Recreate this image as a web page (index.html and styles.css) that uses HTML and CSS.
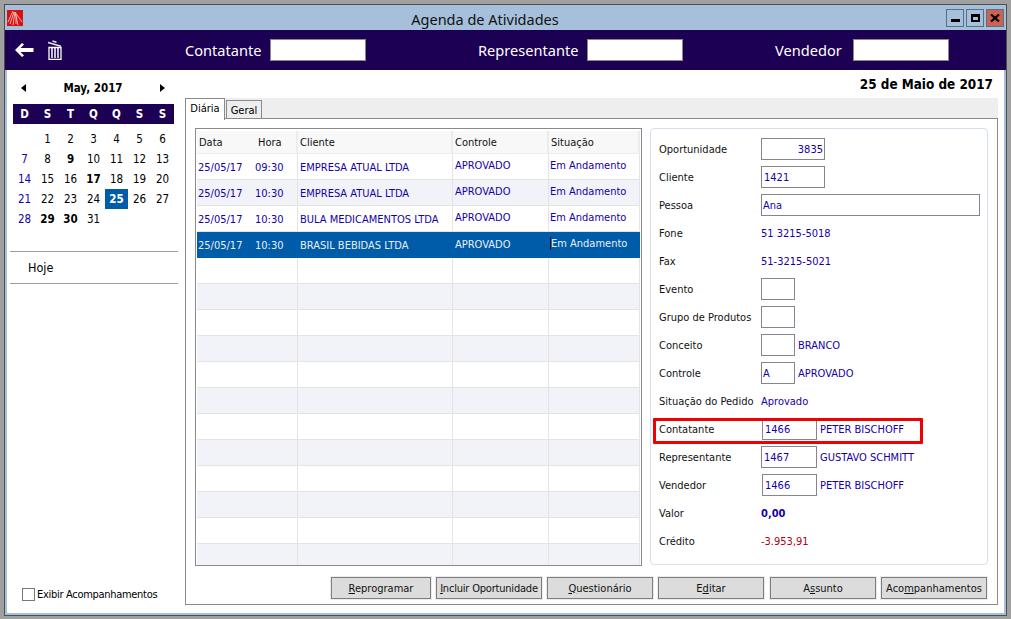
FILE: index.html
```html
<!DOCTYPE html>
<html lang="pt">
<head>
<meta charset="utf-8">
<title>Agenda de Atividades</title>
<link rel="stylesheet" href="styles.css">
</head>
<body>
<div class="window">
  <div class="titlebar">
    <svg class="logo" viewBox="0 0 16 16"><rect width="16" height="16" fill="#d81010"/><path d="M1 12 6 1M3 14 7 2M6 15 8 2 10 9M9 14 9 7M11 15 8 2 15 12" stroke="#f6b0a8" stroke-width="1" fill="none"/></svg>
    <span class="title">Agenda de Atividades</span>
    <div class="winbtns">
      <span class="winbtn"><i class="g-min"></i></span>
      <span class="winbtn"><i class="g-max"></i></span>
      <span class="winbtn winbtn-close">
        <svg viewBox="0 0 10 8" class="g-x"><path d="M1 0.5 9 7.5M9 0.5 1 7.5" stroke="#000" stroke-width="2.2"/></svg>
      </span>
    </div>
  </div>
  <div class="toolbar">
    <div class="tools">
      <svg class="i-back" viewBox="0 0 20 16"><path d="M1 8 8 1 10 2.5 6.5 6H19.5V10H6.5L10 13.5 8 15Z" fill="#fff"/></svg>
      <svg class="i-trash" viewBox="0 0 16 20"><path d="M1 2.4 14 6.2M5.5 1 9.5 2.2" stroke="#e4e4e4" stroke-width="1.6" fill="none"/><path d="M2 7.5H14V19.4H2Z" fill="none" stroke="#fff" stroke-width="1.3"/><path d="M5 8V18M8 8V18M11 8V18" stroke="#fff" stroke-width="1.5"/></svg>
    </div>
    <span class="tb-label tb-first">Contatante</span><span class="tb-input"></span>
    <span class="tb-label tb-second">Representante</span><span class="tb-input"></span>
    <span class="tb-label tb-third">Vendedor</span><span class="tb-input"></span>
  </div>
  <div class="main">
    <aside class="sidebar">
      <div class="month"><span class="arrow-l"></span><b>May, 2017</b><span class="arrow-r"></span></div>
      <div class="cal cal-head"><span>D</span><span>S</span><span>T</span><span>Q</span><span>Q</span><span>S</span><span>S</span></div>
      <div class="cal cal-days">
        <span></span><span>1</span><span>2</span><span>3</span><span>4</span><span>5</span><span>6</span>
        <span class="sun">7</span><span>8</span><b>9</b><span>10</span><span>11</span><span>12</span><span>13</span>
        <span class="sun">14</span><span>15</span><span>16</span><b>17</b><span>18</span><span>19</span><span>20</span>
        <span class="sun">21</span><span>22</span><span>23</span><span>24</span><b class="today">25</b><span>26</span><span>27</span>
        <span class="sun">28</span><b>29</b><b>30</b><span>31</span>
      </div>
      <div class="hoje">Hoje</div>
      <label class="exibir"><span class="check"></span>Exibir Acompanhamentos</label>
    </aside>
    <section class="content">
      <div class="date">25 de Maio de 2017</div>
      <div class="tabs"><span class="tab tab-active">Diária</span><span class="tab">Geral</span></div>
      <div class="panel">
        <div class="panel-top">
          <div class="grid-wrap">
            <table class="grid">
              <colgroup><col class="c1"><col class="c2"><col class="c3"><col class="c4"><col class="c5"></colgroup>
              <thead><tr><th class="h-data">Data</th><th class="h-hora">Hora</th><th>Cliente</th><th>Controle</th><th>Situação</th></tr></thead>
              <tbody>
                <tr><td class="d">25/05/17</td><td class="t">09:30</td><td class="n">EMPRESA ATUAL LTDA</td><td class="up">APROVADO</td><td class="up s">Em Andamento</td></tr>
                <tr><td class="d">25/05/17</td><td class="t">10:30</td><td class="n">EMPRESA ATUAL LTDA</td><td class="up">APROVADO</td><td class="up s">Em Andamento</td></tr>
                <tr><td class="d">25/05/17</td><td class="t">10:30</td><td class="n">BULA MEDICAMENTOS LTDA</td><td class="up">APROVADO</td><td class="up s">Em Andamento</td></tr>
                <tr class="sel"><td class="d">25/05/17</td><td class="t">10:30</td><td class="n">BRASIL BEBIDAS LTDA</td><td class="c">APROVADO</td><td class="up s"><span class="caret">Em Andamento</span></td></tr>
                <tr><td class="d"></td><td></td><td></td><td></td><td></td></tr>
                <tr><td class="d"></td><td></td><td></td><td></td><td></td></tr>
                <tr><td class="d"></td><td></td><td></td><td></td><td></td></tr>
                <tr><td class="d"></td><td></td><td></td><td></td><td></td></tr>
                <tr><td class="d"></td><td></td><td></td><td></td><td></td></tr>
                <tr><td class="d"></td><td></td><td></td><td></td><td></td></tr>
                <tr><td class="d"></td><td></td><td></td><td></td><td></td></tr>
                <tr><td class="d"></td><td></td><td></td><td></td><td></td></tr>
                <tr><td class="d"></td><td></td><td></td><td></td><td></td></tr>
                <tr><td class="d"></td><td></td><td></td><td></td><td></td></tr>
                <tr><td class="d"></td><td></td><td></td><td></td><td></td></tr>
                <tr><td class="d"></td><td></td><td></td><td></td><td></td></tr>
              </tbody>
            </table>
          </div>
          <div class="card">
            <div class="row"><span class="lbl">Oportunidade</span><span class="inp w64 right">3835</span></div>
            <div class="row"><span class="lbl">Cliente</span><span class="inp w64">1421</span></div>
            <div class="row"><span class="lbl">Pessoa</span><span class="inp w219 tight">Ana</span></div>
            <div class="row"><span class="lbl">Fone</span><span class="val">51 3215-5018</span></div>
            <div class="row"><span class="lbl">Fax</span><span class="val">51-3215-5021</span></div>
            <div class="row"><span class="lbl">Evento</span><span class="inp w34"></span></div>
            <div class="row"><span class="lbl">Grupo de Produtos</span><span class="inp w34"></span></div>
            <div class="row"><span class="lbl">Conceito</span><span class="inp w34"></span><span class="val after">BRANCO</span></div>
            <div class="row"><span class="lbl">Controle</span><span class="inp w34 tight">A</span><span class="val after">APROVADO</span></div>
            <div class="row"><span class="lbl">Situação do Pedido</span><span class="val">Aprovado</span></div>
            <div class="row row-mark"><span class="lbl">Contatante</span><span class="inp w55 shift">1466</span><span class="val after">PETER BISCHOFF</span></div>
            <div class="row"><span class="lbl">Representante</span><span class="inp w56">1467</span><span class="val after">GUSTAVO SCHMITT</span></div>
            <div class="row"><span class="lbl">Vendedor</span><span class="inp w55 shift">1466</span><span class="val after">PETER BISCHOFF</span></div>
            <div class="row"><span class="lbl">Valor</span><b class="val">0,00</b></div>
            <div class="row"><span class="lbl">Crédito</span><span class="val neg">-3.953,91</span></div>
          </div>
        </div>
        <div class="buttons">
          <button class="btn b100"><u>R</u>eprogramar</button>
          <button class="btn narrow"><u>I</u>ncluir Oportunidade</button>
          <button class="btn"><u>Q</u>uestionário</button>
          <button class="btn btn-gap">E<u>d</u>itar</button>
          <button class="btn">A<u>s</u>sunto</button>
          <button class="btn">Aco<u>m</u>panhamentos</button>
        </div>
      </div>
    </section>
  </div>
</div>
</body>
</html>
```
FILE: styles.css
```css
*, *::after { box-sizing: border-box; }
html, body { margin: 0; height: 100%; }
body {
  background: #a0a0a0;
  padding: 4px;
  overflow: hidden;
  font: 11px "DejaVu Sans Condensed", "DejaVu Sans", sans-serif;
  color: #000;
}
.window {
  width: 1003px;
  height: 612px;
  border: 1px solid #4e4e4e;
  display: flex;
  flex-direction: column;
  background: #fff;
}
.titlebar {
  height: 25px;
  flex: none;
  background: #a6c0dc;
  position: relative;
  display: flex;
  align-items: center;
}
.logo { width: 16px; height: 16px; margin-left: 2px; }
.title {
  position: absolute;
  left: 0; right: 41px; top: 5px;
  text-align: center;
  font: 14.5px/18px "Noto Sans", sans-serif;
  color: #111;
}
.winbtns { margin-left: auto; margin-right: 2px; display: flex; gap: 2px; }
.winbtn {
  width: 18px; height: 18px;
  border: 1px solid #56708c;
  display: flex; align-items: center; justify-content: center;
  background: #a6c0dc;
}
.winbtn-close { background: #cc6350; }
.g-min { width: 9px; height: 3px; background: #000; margin-top: 5px; }
.g-max { width: 9px; height: 8px; border: 2px solid #000; border-top-width: 3px; }
.g-x { width: 10px; height: 8px; }
.toolbar {
  height: 40px;
  flex: none;
  background: #1b0054;
  display: flex;
  align-items: center;
  color: #fff;
  font: 14.6px "Noto Sans", sans-serif;
}
.tools { width: 180px; display: flex; align-items: center; flex: none; }
.i-back { width: 20px; height: 16px; margin-left: 9px; }
.i-trash { width: 16px; height: 20px; margin-left: 13px; }
.tb-input { width: 96px; height: 22px; background: #fff; border: 1px solid #8a8a8a; flex: none; }
.tb-label { width: 85px; flex: none; }
.tb-second { margin-left: 112px; width: 109px; }
.tb-third { margin-left: 92px; width: 78px; }
.main {
  flex: 1;
  min-height: 0;
  display: flex;
  border: solid #a6c0dc;
  border-width: 0 2px 2px;
}
.sidebar {
  width: 176px;
  flex: none;
  display: flex;
  flex-direction: column;
  padding-left: 6px;
}
.month {
  width: 161px;
  height: 34px;
  padding: 2px 9px 0 8px;
  display: flex;
  justify-content: space-between;
  align-items: center;
  font-size: 11.5px;
}
.month b { font-weight: 700; }
.arrow-l, .arrow-r { width: 0; height: 0; border: solid transparent; border-width: 4px 0; }
.arrow-l { border-right: 5px solid #000; }
.arrow-r { border-left: 5px solid #000; }
.cal { width: 161px; display: grid; grid-template-columns: repeat(7, 23px); text-align: center; font-size: 11.5px; }
.cal-head { height: 20px; background: #1b0054; color: #fff; font-weight: 700; line-height: 20px; }
.cal-days { margin-top: 5px; grid-auto-rows: 20px; line-height: 21px; }
.sun { color: #1500a8; }
.today { background: #005ca8; color: #fff; }
.hoje {
  margin: 22px 0 0 -3px;
  width: 168px;
  height: 33px;
  line-height: 31px;
  padding-left: 18px;
  border: solid #a0a0a0;
  border-width: 1px 0;
  font-size: 12.5px;
}
.exibir {
  margin-top: auto;
  margin-left: 9px;
  margin-bottom: 12px;
  display: flex;
  align-items: center;
  line-height: 13px;
  white-space: nowrap;
  letter-spacing: -0.3px;
}
.check { width: 13px; height: 13px; border: 1px solid #777; margin-right: 2px; background: #fff; }
.content { flex: 1; min-width: 0; padding: 0 6px 0 2px; }
.date {
  height: 28px;
  padding: 6px 5px 0 0;
  text-align: right;
  font-size: 13.4px;
  line-height: 18px;
  font-weight: 700;
}
.tabs { height: 20px; background: #eeeeee; display: flex; align-items: flex-start; position: relative; }
.tab {
  margin-top: 2px;
  height: 18px;
  width: 36px;
  border: 1px solid #8a8a8a;
  border-bottom: 0;
  background: #eeeeee;
  text-align: center;
  line-height: 19px;
  margin-left: 1px;
}
.tab-active {
  margin: 0;
  width: 40px;
  height: 22px;
  background: #fff;
  line-height: 19px;
  position: relative;
  z-index: 1;
}
.panel {
  height: 487px;
  border: 1px solid #8a8a8a;
  padding: 9px 9px 0;
  background: #fff;
}
.panel-top { display: flex; gap: 8px; }
.grid-wrap {
  width: 447px;
  height: 438px;
  border: 1px solid #8a8a8a;
  padding: 2px 1px 0;
  overflow: hidden;
  flex: none;
}
.grid { border-collapse: separate; border-spacing: 0; table-layout: fixed; width: 443px; }
.c1 { width: 56px; } .c2 { width: 45px; } .c3 { width: 155px; } .c4 { width: 96px; } .c5 { width: 91px; }
.grid th {
  height: 23px;
  font-weight: 400;
  text-align: left;
  padding: 0 0 0 2px;
  background: #f8f8f8;
  border-right: 2px solid #ececec;
  border-bottom: 1px solid #ececec;
  color: #111;
}
.grid th.h-data { border-right: 0; }
.grid th.h-hora { padding-left: 5px; }
.grid td {
  height: 26px;
  padding: 0 0 0 1px;
  color: #1500a8;
  border-right: 1px solid #e4e4e4;
  border-bottom: 1px solid #e4e4e4;
  white-space: nowrap;
  overflow: hidden;
}
.grid td.d { border-right: 0; padding-top: 1px; }
.grid td.t { padding: 1px 0 0 2px; }
.grid td.n { padding: 1px 0 0 2px; }
.grid td.up { padding-bottom: 3px; padding-left: 2px; }
.grid td.c { padding-left: 2px; }
.grid td.s { padding-left: 1px; }
.grid tbody tr:nth-child(even) td { background: #f1f3f9; }
.grid tbody tr.sel td { background: #005ca8; color: #e8eef8; border-color: #005ca8; }
.caret { border-left: 1px solid #111; }
.card {
  width: 338px;
  height: 437px;
  border: 1px solid #d5e0ea;
  border-radius: 4px;
  padding: 6px 0 0 8px;
}
.row { height: 28px; display: flex; align-items: center; }
.lbl { width: 102px; flex: none; color: #111; }
.inp {
  height: 22px;
  border: 1px solid #85858f;
  color: #1500a8;
  line-height: 21px;
  padding-left: 2px;
  flex: none;
}
.w64 { width: 64px; } .w34 { width: 34px; } .w219 { width: 219px; } .w56 { width: 56px; } .w55 { width: 55px; }
.right { text-align: right; padding-right: 1px; }
.tight { padding-left: 1px; }
.shift { margin-left: 1px; }
.val { color: #1500a8; }
.val.after { margin-left: 3px; }
.neg { color: #b00020; }
.row-mark { position: relative; }
.row-mark::after {
  content: "";
  position: absolute;
  left: -6px; top: 3px;
  width: 270px; height: 26px;
  border: 3px solid #f00000;
  border-radius: 1px;
}
.buttons { display: flex; justify-content: flex-end; gap: 5px; margin-top: 11px; margin-right: 1px; }
.btn {
  width: 106px;
  height: 22px;
  padding: 0;
  border: 1px solid #7d7d7d;
  outline: 1px solid #ececec;
  background: #dcdcdc;
  font: inherit;
  color: #111;
  white-space: nowrap;
}
.b100 { width: 100px; }
.narrow { letter-spacing: -0.2px; }
.btn-gap { margin-right: 1px; }
```
